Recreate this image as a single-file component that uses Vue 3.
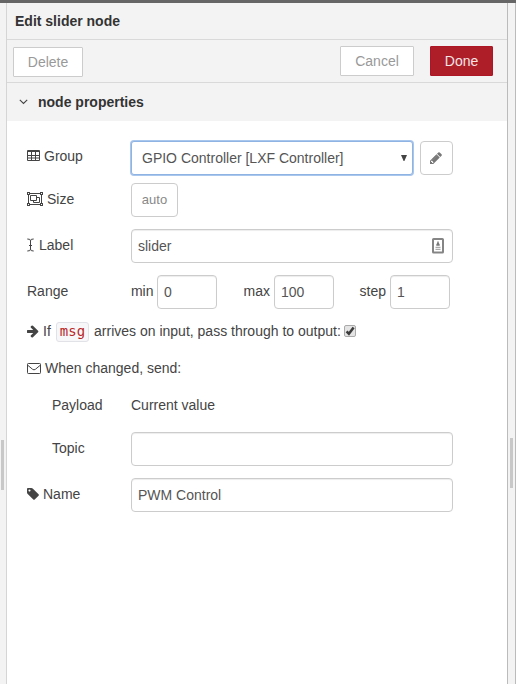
<script setup>
import { ref } from 'vue'

const group = ref('GPIO Controller [LXF Controller]')
const label = ref('slider')
const range = ref([
  { name: 'min', value: '0' },
  { name: 'max', value: '100' },
  { name: 'step', value: '1' },
])
const passthru = ref(true)
const topic = ref('')
const name = ref('PWM Control')
</script>

<template>
  <div class="editor">
    <div class="gutter left"><i class="grip"></i></div>
    <main class="tray">
      <header class="title">Edit slider node</header>
      <div class="toolbar">
        <button class="btn delete">Delete</button>
        <button class="btn cancel">Cancel</button>
        <button class="btn done">Done</button>
      </div>
      <div class="section">
        <svg class="chevron" width="9" height="6" viewBox="0 0 9 6"><path d="M.8.8 4.500 4.500 8.200.8" fill="none" stroke="#444" stroke-width="1.100" /></svg>
        <span>node properties</span>
      </div>
      <form class="form" @submit.prevent>
        <div class="row first">
          <label class="lbl">
            <svg width="13" height="14" viewBox="0 0 13 14"><path fill="#444" d="M1 1h11a1 1 0 0 1 1 1v2H0V2a1 1 0 0 1 1-1z" /><path d="M.5 2v9.500h12V2M4.500 3v8.500M8.500 3v8.500M0 6.500h13M0 9h13" fill="none" stroke="#444" /><path fill="#fff" d="M1 3h3v1H1zM5 3h3v1H5zM9 3h3v1H9z" /></svg>
            <span>Group</span>
          </label>
          <div class="select-wrap">
            <select v-model="group" class="field select"><option>GPIO Controller [LXF Controller]</option></select>
            <svg class="caret" width="6" height="6" viewBox="0 0 6 6"><path d="M0 0h6L3.400 6h-.8z" fill="#444" /></svg>
          </div>
          <button class="square edit">
            <svg width="14" height="14" viewBox="0 0 1792 1792"><path fill="#777" d="M491 1536l91-91-235-235-91 91v107h128v128h107zm523-928q0-22-22-22-10 0-17 7l-542 542q-7 7-7 17 0 22 22 22 10 0 17-7l542-542q7-7 7-17zm-54-192l416 416-832 832h-416v-416zm683 96q0 53-37 90l-166 166-416-416 166-165q36-38 90-38 53 0 91 38l235 234q37 39 37 91z" /><path d="M930 530 400 1060l100 120 560-540z" fill="#777" /></svg>
          </button>
        </div>
        <div class="row">
          <label class="lbl">
            <svg width="16" height="14" viewBox="0 0 16 14"><g fill="none" stroke="#444"><path d="M1.500 1.500h13v11h-13z" /><path d="M3.500 3.500h6v5h-6zM9.500 5.500h3v5h-6v-2" /></g><path fill="#444" fill-rule="evenodd" d="M0 0h3v3H0zM1 1v1h1V1zM13 0h3v3h-3zM14 1v1h1V1zM0 11h3v3H0zM1 12v1h1v-1zM13 11h3v3h-3zM14 12v1h1v-1z" /><path fill="#fff" d="M1 1h1v1H1zM14 1h1v1h-1zM1 12h1v1H1zM14 12h1v1h-1z" /></svg>
            <span>Size</span>
          </label>
          <button class="square auto">auto</button>
        </div>
        <div class="row">
          <label class="lbl">
            <svg width="8" height="14" viewBox="0 0 8 14"><path d="M.3 1Q3.500.8 3.500 2.800v8.400q0 2-3.200 1.800M6.700 1Q3.500.8 3.500 2.800v8.400q0 2 3.200 1.800M2 7.500h3" fill="none" stroke="#444" /></svg>
            <span>Label</span>
          </label>
          <div class="input-wrap">
            <input v-model="label" class="field wide" />
            <svg class="card" width="12" height="16" viewBox="0 0 12 16"><rect x="1" y="1" width="10" height="13.600" rx=".6" fill="#fff" stroke="#858585" stroke-width="2" /><path fill="#777" d="M5.300 3.500h1.400v1.300l1 1.700v1.200H4.300V6.500l1-1.700z" /><path fill="#aaa" d="M3.500 8.700h5v1.200h-5zM3.500 10.700h5v1.200h-5z" /></svg>
          </div>
        </div>
        <div class="row">
          <label class="lbl">Range</label>
          <div class="ranges">
            <label v-for="r in range" :key="r.name" :class="['range', r.name]"><span>{{ r.name }}</span><input v-model="r.value" class="field short" /></label>
          </div>
        </div>
        <label class="row line">
          <svg class="ico" width="12" height="14" viewBox="150 0 1536 1792"><path fill="#444" d="M1600 960q0 54-37 91l-651 651q-39 37-91 37-51 0-90-37l-75-75q-38-38-38-91t38-91l293-293h-704q-52 0-84.500-37.500t-32.500-90.500v-128q0-53 32.500-90.500t84.500-37.500h704l-293-294q-38-36-38-90t38-90l75-75q38-38 90-38 53 0 91 38l651 651q37 35 37 90z" /></svg>
          <span>If</span><code>msg</code><span>arrives on input, pass through to output:</span>
          <input v-model="passthru" type="checkbox" class="native" />
          <span class="box"><svg v-if="passthru" width="10" height="10" viewBox="0 0 10 10"><path d="M1.600 5.300 3.900 7.800 8.600 1.400" fill="none" stroke="#3c3c3c" stroke-width="2.500" /></svg></span>
        </label>
        <div class="row line">
          <svg class="ico" width="14" height="14" viewBox="0 0 14 14"><rect x=".5" y="2.500" width="13" height="10" rx=".8" fill="none" stroke="#444" /><path d="M.7 4.200 5.600 8.300q1.400 1.100 2.800 0l4.900-4.100" fill="none" stroke="#444" /></svg>
          <span>When changed, send:</span>
        </div>
        <div class="row line">
          <label class="lbl indent">Payload</label>
          <span>Current value</span>
        </div>
        <div class="row">
          <label class="lbl indent">Topic</label>
          <input v-model="topic" class="field wide" />
        </div>
        <div class="row">
          <label class="lbl">
            <svg width="12" height="14" viewBox="128 0 1536 1792"><path fill="#444" d="M576 448q0-53-37.500-90.500t-90.500-37.500-90.500 37.500-37.500 90.500 37.500 90.500 90.500 37.500 90.500-37.500 37.500-90.500zm1067 576q0 53-37 90l-491 492q-39 37-91 37-53 0-90-37l-715-716q-38-37-64.500-101t-26.500-117v-416q0-52 38-90t90-38h416q53 0 117 26.500t102 64.500l715 714q37 39 37 91z" /></svg>
            <span>Name</span>
          </label>
          <input v-model="name" class="field wide" />
        </div>
      </form>
    </main>
    <div class="gutter right"><i class="grip"></i></div>
  </div>
</template>

<style>
body { margin: 0; overflow: hidden; }
</style>

<style scoped>
* { box-sizing: border-box; }
.editor {
  display: flex;
  width: 516px;
  height: 684px;
  border-top: 3px solid #666;
  background: #fff;
  color: #444;
  font: 14px/20px "Liberation Sans", Arial, sans-serif;
}
.gutter { flex: none; background: #f3f3f3; padding-top: 437px; }
.left { width: 7px; border-right: 1px solid #d5d5d5; padding-left: 1px; }
.right { width: 9px; border: solid #bbb; border-width: 0 1px; padding: 435px 0 0 2px; }
.grip { display: block; width: 3px; height: 50px; background: #c8c8c8; }
.tray { flex: 1; min-width: 0; }
.title {
  height: 37px;
  padding: 8px 8px 0;
  border-bottom: 1px solid #d9d9d9;
  background: #f3f3f3;
  color: #333;
  font-weight: bold;
}
.toolbar {
  display: flex;
  height: 43px;
  padding: 6px 14px 0 6px;
  border-bottom: 1px solid #d9d9d9;
  background: #f3f3f3;
}
button { padding: 0; background: #fff; color: #999; font: inherit; }
.btn { height: 30px; border: 1px solid #ccc; border-radius: 1px; }
.delete { width: 70px; margin-top: 1px; }
.cancel { width: 74px; margin-left: auto; }
.done { width: 63px; margin-left: 16px; border-color: #ad1625; background: #ad1e28; color: #f3e5e6; }
.section {
  display: flex;
  align-items: center;
  height: 38px;
  padding-left: 12px;
  background: #f3f3f3;
  color: #333;
  font-weight: bold;
}
.chevron { margin-right: 10px; }
.form { padding: 20px 0 0 20px; }
.row { display: flex; height: 34px; margin-bottom: 12px; }
.first { margin-bottom: 8px; }
.line { height: 25px; }
.lbl { display: flex; gap: 4px; flex: none; width: 104px; height: 20px; margin-top: 6px; }
.lbl svg { margin-top: 3px; }
.first .lbl { margin-top: 5px; }
.line .lbl { margin-top: 0; }
.indent { padding-left: 25px; }
.ico { flex: none; margin: 3px 4px 0 0; }
.field {
  display: block;
  height: 34px;
  padding: 0 6px;
  border: 1px solid #ccc;
  border-radius: 4px;
  outline: none;
  background: #fff;
  box-shadow: inset 0 1px 1px rgba(0, 0, 0, .075);
  color: #555;
  font: inherit;
}
.wide { width: 322px; }
.short { width: 60px; }
.select-wrap, .input-wrap { position: relative; }
.select {
  width: 282px;
  padding: 0 10px;
  border-color: #8fb3e2;
  border-radius: 3px;
  box-shadow: 0 0 0 1px #a9c6ec;
  appearance: none;
}
.caret { position: absolute; right: 6px; top: 14px; }
.card { position: absolute; right: 9px; top: 9px; }
.square { height: 34px; border: 1px solid #ccc; border-radius: 4px; font-size: 13px; }
.edit { display: flex; align-items: center; width: 33px; margin-left: 7px; padding: 0 0 1px 8px; }
.auto { width: 47px; color: #888; }
.ranges { display: flex; }
.range { display: flex; justify-content: flex-end; gap: 4px; }
.range span { margin-top: 6px; }
.min { width: 86px; gap: 3.500px; }
.max { width: 117px; }
.step { width: 116px; }
code {
  height: 20px;
  margin: 1px 5px 0;
  padding: 0 3px;
  border: 1px solid #e1e1e8;
  border-radius: 3px;
  background: #f7f7f9;
  color: #b72828;
  font: 14px/17px "DejaVu Sans Mono", monospace;
}
.native { position: absolute; opacity: 0; pointer-events: none; }
.box {
  display: flex;
  align-items: center;
  justify-content: center;
  width: 12px;
  height: 12px;
  margin: 4px 0 0 3px;
  border: 1px solid #aaa;
  border-radius: 2px;
  background: #e4e4e4;
}
</style>
